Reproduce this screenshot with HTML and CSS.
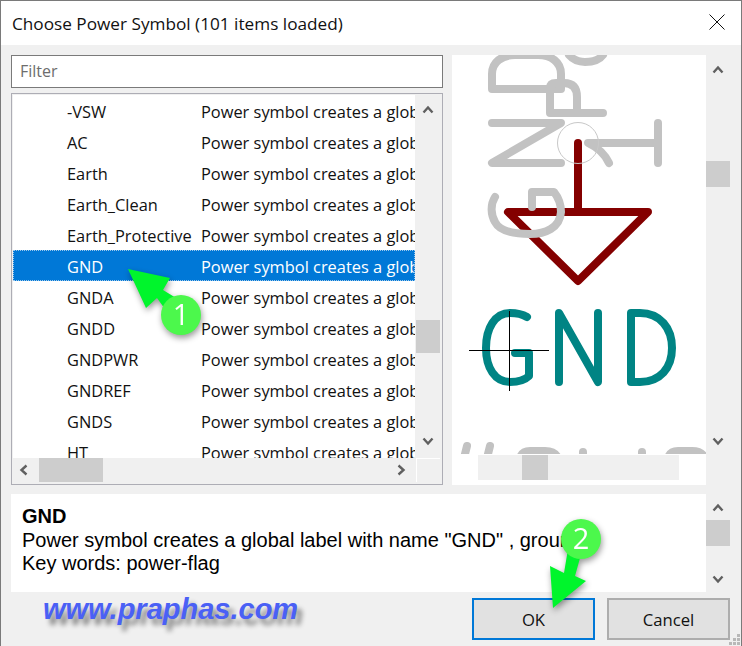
FILE: index.html
```html
<!DOCTYPE html>
<html lang="en">
<head>
<meta charset="utf-8">
<title>Choose Power Symbol</title>
<link rel="stylesheet" href="styles.css">
</head>
<body>
<div class="window">
  <header class="titlebar">
    <span class="title">Choose Power Symbol (101 items loaded)</span>
    <svg class="close" width="16" height="16" viewBox="0 0 16 16"><path d="M0.5 0.5L15.5 15.5M15.5 0.5L0.5 15.5"/></svg>
  </header>
  <main class="body">
    <section class="top">
      <div class="left">
        <div class="filter">Filter</div>
        <div class="listbox">
          <div class="list-main">
            <div class="rows">
              <div class="row"><span class="name">-VSW</span><span class="desc">Power symbol creates a global label</span></div>
              <div class="row"><span class="name">AC</span><span class="desc">Power symbol creates a global label</span></div>
              <div class="row"><span class="name">Earth</span><span class="desc">Power symbol creates a global label</span></div>
              <div class="row"><span class="name">Earth_Clean</span><span class="desc">Power symbol creates a global label</span></div>
              <div class="row"><span class="name">Earth_Protective</span><span class="desc">Power symbol creates a global label</span></div>
              <div class="row selected"><span class="name">GND</span><span class="desc">Power symbol creates a global label</span></div>
              <div class="row"><span class="name">GNDA</span><span class="desc">Power symbol creates a global label</span></div>
              <div class="row"><span class="name">GNDD</span><span class="desc">Power symbol creates a global label</span></div>
              <div class="row"><span class="name">GNDPWR</span><span class="desc">Power symbol creates a global label</span></div>
              <div class="row"><span class="name">GNDREF</span><span class="desc">Power symbol creates a global label</span></div>
              <div class="row"><span class="name">GNDS</span><span class="desc">Power symbol creates a global label</span></div>
              <div class="row"><span class="name">HT</span><span class="desc">Power symbol creates a global label</span></div>
            </div>
            <div class="hscroll">
              <svg class="chev" width="12" height="12" viewBox="0 0 12 12"><path d="M8.5 1.5L3.5 6L8.5 10.5"/></svg>
              <div class="hthumb-track"><div class="hthumb"></div></div>
              <svg class="chev" width="12" height="12" viewBox="0 0 12 12"><path d="M3.5 1.5L8.5 6L3.5 10.5"/></svg>
            </div>
          </div>
          <div class="list-side">
            <div class="vscroll list-v">
              <svg class="chev" width="12" height="12" viewBox="0 0 12 12"><path d="M1.5 8.5L6 3.5L10.5 8.5"/></svg>
              <div class="vtrack"><div class="vthumb list-thumb"></div></div>
              <svg class="chev" width="12" height="12" viewBox="0 0 12 12"><path d="M1.5 3.5L6 8.5L10.5 3.5"/></svg>
            </div>
            <div class="corner"></div>
          </div>
        </div>
      </div>
      <div class="preview">
        <div class="canvas-wrap">
          <svg class="canvas" width="254" height="399" viewBox="452 55 254 399">
            <g class="sym-red">
              <path d="M578 143V212"/>
              <path d="M508 212H648L578 281Z"/>
            </g>
            <g class="sym-gray">
              <path d="M492 89H561M492 89V74C492 62 502 55 515 55H538C551 55 561 62 561 74V89"/>
              <path d="M492 123H561L492 163H561"/>
              <path d="M495 197C490 205 491 215 495 222C500 232 515 234 530 234C545 234 560 228 561 212C561 203 558 197 554 192H532V207"/>
              <path d="M603 113H550V88Q550 83 556 83H564Q577 83 577 97V113"/>
              <path d="M569 55Q575 62 585 62Q598 62 603 55"/>
              <path d="M658 123V163M658 143H588Q603 150 609 163"/>
              <path d="M467 446L464 458M490 446L487 458M520 458Q522 451 530 451H545Q555 451 558 458M583 452V458M642 452V458M668 458Q670 451 678 451H692Q702 451 705 458"/>
            </g>
            <circle class="sym-origin" cx="578" cy="143" r="20.5"/>
            <g class="sym-teal">
              <path d="M527 317C522 314 515 313 510 313C495 313 486 328 486 348C486 368 495 382 510 382C518 382 525 380 529 376V353H515"/>
              <path d="M559 382V313L598 382V313"/>
              <path d="M631 382V313H640C660 313 672 328 672 348C672 368 660 382 640 382Z"/>
            </g>
            <path class="sym-cross" d="M509.5 311V391M469 350.5H549"/>
          </svg>
          <div class="canvas-hbar"><div class="canvas-htrack"><div class="canvas-hthumb"></div></div></div>
        </div>
        <div class="vscroll canvas-v">
          <svg class="chev" width="12" height="12" viewBox="0 0 12 12"><path d="M1.5 8.5L6 3.5L10.5 8.5"/></svg>
          <div class="vtrack"><div class="vthumb canvas-thumb"></div></div>
          <svg class="chev" width="12" height="12" viewBox="0 0 12 12"><path d="M1.5 3.5L6 8.5L10.5 3.5"/></svg>
        </div>
      </div>
    </section>
    <section class="details">
      <div class="details-text">
        <div class="details-name">GND</div>
        <div class="details-line">Power symbol creates a global label with name "GND" , ground</div>
        <div class="details-line">Key words: power-flag</div>
      </div>
      <div class="vscroll details-v">
        <svg class="chev" width="12" height="12" viewBox="0 0 12 12"><path d="M1.5 8.5L6 3.5L10.5 8.5"/></svg>
        <div class="vtrack"><div class="vthumb details-thumb"></div></div>
        <svg class="chev" width="12" height="12" viewBox="0 0 12 12"><path d="M1.5 3.5L6 8.5L10.5 3.5"/></svg>
      </div>
    </section>
    <footer class="footer">
      <button class="btn btn-default">OK</button>
      <button class="btn">Cancel</button>
    </footer>
  </main>
  <svg class="grip" width="12" height="12" viewBox="0 0 12 12"><path d="M8 0h3v3H8zM4 4h3v3H4zM8 4h3v3H8zM0 8h3v3H0zM4 8h3v3H4zM8 8h3v3H8z"/></svg>
  <div class="watermark">www.praphas.com</div>
  <svg class="notes" width="742" height="646" viewBox="0 0 742 646">
    <g class="note-shadow">
      <polygon class="note-arrow" points="128,269 170,278 163,290 181,301 170,316 157,298 146,308"/>
      <circle class="note-dot" cx="181" cy="315" r="20"/>
      <text class="note-num" x="181" y="325">1</text>
    </g>
    <g class="note-shadow">
      <polygon class="note-arrow" points="553,608 550,566 564,573 568,549 580,558 575,576 586,581"/>
      <circle class="note-dot" cx="581" cy="539" r="20"/>
      <text class="note-num" x="581" y="549">2</text>
    </g>
  </svg>
</div>
</body>
</html>
```

FILE: styles.css
```css
* { box-sizing: border-box; }
html, body { margin: 0; padding: 0; overflow: hidden; }
body { width: 742px; height: 646px; font-family: "Open Sans", "Noto Sans", sans-serif; color: #000; }

.window {
  position: relative;
  width: 742px;
  height: 646px;
  background: #f0f0f0;
  border: 1px solid #7a7a7a;
  border-bottom: 0;
  display: flex;
  flex-direction: column;
  overflow: hidden;
}

.titlebar {
  height: 44px;
  flex: none;
  background: #fff;
  display: flex;
  align-items: center;
  justify-content: space-between;
  padding: 0 16px 0 11px;
}
.title { font-size: 17.2px; color: #111; }
.close { margin-bottom: 2px; }
.close path { stroke: #111; stroke-width: 1; fill: none; }

.body {
  flex: 1;
  display: flex;
  flex-direction: column;
  padding: 10px 11px 0 10px;
}

.top { display: flex; height: 430px; gap: 9px; }

.left { width: 432px; display: flex; flex-direction: column; gap: 5px; }

.filter {
  height: 33px;
  background: #fff;
  border: 1px solid #7a7a7a;
  padding: 0 8px;
  font-size: 16px;
  line-height: 31px;
  color: #6d6d6d;
}

.listbox {
  height: 392px;
  border: 1px solid #adadb5;
  padding: 1px 2px 2px 1px;
  background: #f0f0f0;
  display: flex;
  gap: 1px;
}
.list-main { width: 402px; display: flex; flex-direction: column; background: #fff; }
.rows { height: 363px; overflow: hidden; background: #fff; }
.row {
  height: 31px;
  display: flex;
  align-items: center;
  padding-top: 1px;
  font-size: 16.4px;
  white-space: nowrap;
  overflow: hidden;
  color: #111;
}
.row.selected { background: #0078d7; color: #fff; outline: 1px dotted #9cc8ec; outline-offset: -1px; }
.name { width: 188px; padding-left: 54px; flex: none; }
.desc { flex: none; }

.hscroll {
  height: 24px;
  background: #f0f0f0;
  display: flex;
  align-items: center;
  padding: 0 8px 0 5px;
}
.hthumb-track { flex: 1; height: 24px; padding-left: 9px; }
.hthumb { width: 64px; height: 24px; background: #cdcdcd; }

.list-side { width: 24px; display: flex; flex-direction: column; }
.list-v { height: 361px; padding-bottom: 6px; }
.corner { flex: 1; margin-top: 2px; background: #f0f0f0; border-top: 1px solid #fff; border-left: 1px solid #fff; }

.vscroll {
  width: 24px;
  flex: none;
  background: #f0f0f0;
  display: flex;
  flex-direction: column;
  align-items: center;
  padding: 9px 0;
}
.vtrack { flex: 1; width: 100%; }
.vthumb { width: 100%; background: #cdcdcd; }
.list-thumb { height: 33px; margin-top: 204px; }
.canvas-thumb { height: 26px; margin-top: 85px; }
.details-thumb { height: 26px; margin-top: 6px; }

.chev { flex: none; }
.chev path { stroke: #606060; stroke-width: 2.4; fill: none; }

.preview { width: 278px; display: flex; }
.canvas-wrap { width: 254px; background: #fff; display: flex; flex-direction: column; }
.canvas { display: block; flex: none; }
.canvas-hbar { height: 31px; padding: 1px 26px 5px 26px; background: #fff; }
.canvas-htrack { height: 25px; width: 201px; background: #f0f0f0; padding-left: 44px; }
.canvas-hthumb { width: 26px; height: 25px; background: #cdcdcd; }
.canvas-v { height: 395px; padding: 9px 0 3px; }

.sym-red path { stroke: #840000; stroke-width: 8; fill: none; stroke-linecap: round; stroke-linejoin: round; }
.sym-gray path { stroke: #c2c2c2; stroke-width: 8; fill: none; stroke-linecap: round; stroke-linejoin: round; }
.sym-origin { stroke: #c8c8c8; stroke-width: 1; fill: none; }
.sym-teal path { stroke: #008484; stroke-width: 8; fill: none; stroke-linecap: round; stroke-linejoin: round; }
.sym-cross { stroke: #000; stroke-width: 1; fill: none; }

.details { height: 98px; margin-top: 9px; display: flex; }
.details-text {
  width: 695px;
  background: #fff;
  padding: 11px 11px;
  overflow: hidden;
  white-space: nowrap;
  font-family: "Liberation Sans", Arial, sans-serif;
  font-size: 20px;
  line-height: 23.5px;
}
.details-name { font-weight: bold; }
.details-v { padding: 8px 0 7px; }

.footer { display: flex; justify-content: flex-end; gap: 12px; margin-top: 6px; }
.btn {
  width: 123px;
  height: 42px;
  background: #e1e1e1;
  border: 2px solid #adadad;
  border-radius: 0;
  font-family: "Open Sans", "Noto Sans", sans-serif;
  font-size: 16.7px;
  color: #111;
  padding: 0;
}
.btn-default { border-color: #0078d7; }

.grip { position: absolute; right: 0; bottom: 0; }
.grip path { fill: #b8b8b8; }

.watermark {
  position: absolute;
  left: 42px;
  top: 591px;
  font-family: "Liberation Sans", Arial, sans-serif;
  font-size: 29px;
  font-weight: bold;
  font-style: italic;
  line-height: 34px;
  color: #4a60f5;
  text-shadow: 5px 6px 5px rgba(0, 0, 0, .45);
}

.notes { position: absolute; left: -1px; top: -1px; pointer-events: none; }
.note-shadow { filter: drop-shadow(1px 3px 3px rgba(0, 0, 0, .4)); }
.note-arrow { fill: #00f52c; }
.note-dot { fill: #4cf84c; }
.note-num { fill: #fff; font-family: "Open Sans", sans-serif; font-size: 29px; text-anchor: middle; }
```
